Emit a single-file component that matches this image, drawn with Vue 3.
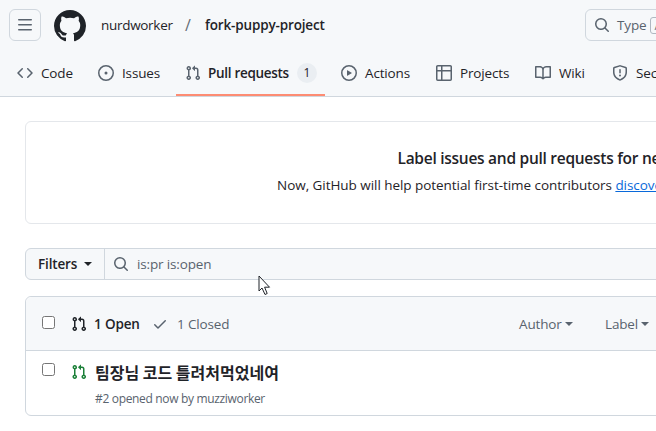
<script setup>
const paths = {
  code: 'M11.28 3.22l4.25 4.25a.75.75 0 010 1.06l-4.25 4.25a.749.749 0 01-1.275-.326.749.749 0 01.215-.734L13.94 8l-3.72-3.72a.749.749 0 01.326-1.275.749.749 0 01.734.215zm-6.56 0a.751.751 0 011.042.018.751.751 0 01.018 1.042L2.06 8l3.72 3.72a.749.749 0 01-.326 1.275.749.749 0 01-.734-.215L.47 8.53a.75.75 0 010-1.06z',
  issue: 'M8 9.5a1.5 1.5 0 100-3 1.5 1.5 0 000 3z M8 0a8 8 0 110 16A8 8 0 018 0zM1.5 8a6.5 6.5 0 1013 0 6.5 6.5 0 00-13 0z',
  pr: 'M1.5 3.25a2.25 2.25 0 113 2.122v5.256a2.251 2.251 0 11-1.5 0V5.372A2.25 2.25 0 011.5 3.25zm5.677-.177L9.573.677A.25.25 0 0110 .854V2.5h1A2.5 2.5 0 0113.5 5v5.628a2.251 2.251 0 11-1.5 0V5a1 1 0 00-1-1h-1v1.646a.25.25 0 01-.427.177L7.177 3.427a.25.25 0 010-.354zM3.75 2.5a.75.75 0 100 1.5.75.75 0 000-1.5zm0 9.5a.75.75 0 100 1.5.75.75 0 000-1.5zm8.25.75a.75.75 0 101.5 0 .75.75 0 00-1.5 0z',
  play: 'M8 0a8 8 0 110 16A8 8 0 018 0zM1.5 8a6.5 6.5 0 1013 0 6.5 6.5 0 00-13 0zm4.879-2.773l4.264 2.559a.25.25 0 010 .428l-4.264 2.559A.25.25 0 016 10.559V5.442a.25.25 0 01.379-.215z',
  table: 'M0 1.75C0 .784.784 0 1.75 0h12.5C15.216 0 16 .784 16 1.75v12.5A1.75 1.75 0 0114.25 16H1.75A1.75 1.75 0 010 14.25zM6.5 6.5v8h7.75a.25.25 0 00.25-.25V6.5zm8-1.5V1.75a.25.25 0 00-.25-.25H6.5V5zM5 1.5H1.75a.25.25 0 00-.25.25V5H5zM1.5 6.5v7.75c0 .138.112.25.25.25H5v-8z',
  book: 'M0 1.75A.75.75 0 01.75 1h4.253c1.227 0 2.317.59 3 1.501A3.743 3.743 0 0111.006 1h4.245a.75.75 0 01.75.75v10.5a.75.75 0 01-.75.75h-4.507a2.25 2.25 0 00-1.591.659l-.622.621a.75.75 0 01-1.06 0l-.622-.621A2.25 2.25 0 005.258 13H.75a.75.75 0 01-.75-.75zm7.251 10.324l.004-5.073-.002-2.253A2.25 2.25 0 005.003 2.5H1.5v9h3.757a3.75 3.75 0 011.994.574zM8.755 4.75l-.004 7.322a3.752 3.752 0 011.992-.572H14.5v-9h-3.495a2.25 2.25 0 00-2.25 2.25z',
  shield: 'M7.467.133a1.748 1.748 0 011.066 0l5.25 1.68A1.75 1.75 0 0115 3.48V7c0 1.566-.32 3.182-1.303 4.682-.983 1.498-2.585 2.813-5.032 3.855a1.697 1.697 0 01-1.33 0c-2.447-1.042-4.049-2.357-5.032-3.855C1.32 10.182 1 8.566 1 7V3.48a1.75 1.75 0 011.217-1.667zm.61 1.429a.25.25 0 00-.153 0l-5.25 1.68a.25.25 0 00-.174.238V7c0 1.358.275 2.666 1.057 3.86.784 1.194 2.121 2.34 4.366 3.297a.196.196 0 00.154 0c2.245-.956 3.582-2.104 4.366-3.298C13.225 9.666 13.5 8.36 13.5 7V3.48a.25.25 0 00-.174-.237zM9 10.5a1 1 0 11-2 0 1 1 0 012 0zm-.25-5.75a.75.75 0 10-1.5 0v3a.75.75 0 101.5 0z',
  search: 'M10.68 11.74a6 6 0 01-7.922-8.982 6 6 0 018.982 7.922l3.04 3.04a.749.749 0 01-.326 1.275.749.749 0 01-.734-.215zM11.5 7a4.499 4.499 0 10-8.997 0A4.499 4.499 0 0011.5 7z',
  check: 'M13.78 4.22a.75.75 0 010 1.06l-7.25 7.25a.75.75 0 01-1.06 0L2.22 9.28a.751.751 0 01.018-1.042.751.751 0 011.042-.018L6 10.94l6.72-6.72a.75.75 0 011.06 0z',
  bars: 'M1 2.75A.75.75 0 011.75 2h12.5a.75.75 0 010 1.5H1.75A.75.75 0 011 2.75zm0 5A.75.75 0 011.75 7h12.5a.75.75 0 010 1.5H1.75A.75.75 0 011 7.75zM1.75 12h12.5a.75.75 0 010 1.5H1.75a.75.75 0 010-1.5z',
  github: 'M8 0c4.42 0 8 3.58 8 8a8.013 8.013 0 01-5.45 7.59c-.4.08-.55-.17-.55-.38 0-.27.01-1.13.01-2.2 0-.75-.25-1.23-.54-1.48 1.78-.2 3.65-.88 3.65-3.95 0-.88-.31-1.59-.82-2.15.08-.2.36-1.02-.08-2.12 0 0-.67-.22-2.2.82-.64-.18-1.32-.27-2-.27-.68 0-1.36.09-2 .27-1.53-1.03-2.2-.82-2.2-.82-.44 1.1-.16 1.92-.08 2.12-.51.56-.82 1.28-.82 2.15 0 3.06 1.86 3.75 3.64 3.95-.23.2-.44.55-.51 1.07-.46.21-1.61.55-2.33-.66-.15-.24-.6-.83-1.23-.82-.67.01-.27.38.01.53.34.19.73.9.82 1.13.16.45.68 1.31 2.69.94 0 .67.01 1.3.01 1.49 0 .21-.15.45-.55.38A7.995 7.995 0 010 8c0-4.42 3.58-8 8-8z'
}
const tabs = [
  { icon: 'code', label: 'Code', width: 74 },
  { icon: 'issue', label: 'Issues', width: 80 },
  { icon: 'pr', label: 'Pull requests', count: 1, active: true, width: 149 },
  { icon: 'play', label: 'Actions', width: 88 },
  { icon: 'table', label: 'Projects', width: 92 },
  { icon: 'book', label: 'Wiki', width: 70 },
  { icon: 'shield', label: 'Security', width: 100 }
]
</script>

<template>
  <div class="page">
    <header class="header">
      <div class="topbar">
        <button class="menu"><svg width="16" height="16" viewBox="0 0 16 16"><path :d="paths.bars" /></svg></button>
        <svg class="logo" width="32" height="32" viewBox="0 0 16 16"><path :d="paths.github" /></svg>
        <span class="owner">nurdworker</span>
        <span class="slash">/</span>
        <span class="repo">fork-puppy-project</span>
        <div class="topsearch">
          <svg width="16" height="16" viewBox="0 0 16 16"><path :d="paths.search" /></svg>
          <span class="type">Type</span>
          <span class="kbd">/</span>
        </div>
      </div>
      <nav class="tabs">
        <a v-for="t in tabs" :key="t.label" class="tab" :class="{ active: t.active }" :style="{ width: t.width + 'px' }">
          <svg width="16" height="16" viewBox="0 0 16 16"><path :d="paths[t.icon]" /></svg>
          <span class="tab-label">{{ t.label }}</span>
          <span v-if="t.count" class="count">{{ t.count }}</span>
        </a>
      </nav>
    </header>

    <main class="main">
      <section class="banner">
        <h2>Label issues and pull requests for new contributors</h2>
        <p>Now, GitHub will help potential first-time contributors <a>discover issues</a> labeled with good first issue</p>
      </section>

      <div class="filterbar">
        <button class="filters">Filters<i class="caret"></i></button>
        <div class="query">
          <svg width="16" height="16" viewBox="0 0 16 16"><path :d="paths.search" /></svg>
          <span>is:pr is:open</span>
        </div>
      </div>

      <section class="box">
        <div class="box-head">
          <span class="cb head-cb"></span>
          <svg class="open-ic" width="16" height="16" viewBox="0 0 16 16"><path :d="paths.pr" /></svg>
          <span class="open">1 Open</span>
          <svg class="check-ic" width="16" height="16" viewBox="0 0 16 16"><path :d="paths.check" /></svg>
          <span class="closed">1 Closed</span>
          <span class="sort first">Author<i class="caret"></i></span>
          <span class="sort">Label<i class="caret"></i></span>
        </div>
        <div class="row">
          <span class="cb row-cb"></span>
          <svg class="row-ic" width="16" height="16" viewBox="0 0 16 16"><path :d="paths.pr" /></svg>
          <div class="row-body">
            <div class="title">팀장님 코드 틀려처먹었네여</div>
            <div class="meta">#2 opened now by muzziworker</div>
          </div>
        </div>
      </section>
    </main>

    <svg class="cursor" width="14" height="21" viewBox="0 0 14 21">
      <path d="M1 1V16L4 13 7 19.5 9.2 18.5 6.6 12.2H11.5Z" fill="#fff" stroke="#1f2328" stroke-width="1" stroke-linejoin="miter" />
    </svg>
  </div>
</template>

<style>
html, body { margin: 0; overflow: hidden; background: #fff; }
</style>

<style scoped>
.page {
  position: relative;
  width: 656px;
  height: 431px;
  overflow: hidden;
  font-family: "Open Sans", "Noto Sans CJK KR", sans-serif;
  font-size: 13.5px;
  letter-spacing: -0.15px;
  color: #1f2328;
}
.header {
  width: 656px;
  height: 97px;
  box-sizing: border-box;
  background: #f6f8fa;
  border-bottom: 1px solid #d0d7de;
  overflow: hidden;
}
.topbar {
  display: flex;
  align-items: center;
  height: 32px;
  padding: 9px 0 0 9px;
  width: 900px;
}
.menu {
  width: 32px;
  height: 32px;
  padding: 0;
  border: 1px solid #d0d7de;
  border-radius: 6px;
  background: #f6f8fa;
  display: flex;
  align-items: center;
  justify-content: center;
  margin-right: 13px;
}
.menu svg { fill: #59636e; }
.logo { fill: #1f2328; margin-right: 15px; margin-top: 1px; }
.owner { width: 84px; letter-spacing: -0.3px; }
.slash { width: 20px; color: #656d76; font-size: 16px; }
.repo { font-weight: 600; width: 380px; }
.topsearch {
  width: 300px;
  height: 32px;
  box-sizing: border-box;
  border: 1px solid #d0d7de;
  border-radius: 6px;
  display: flex;
  align-items: center;
  padding-left: 8px;
  color: #59636e;
  flex: none;
}
.topsearch svg { fill: #59636e; margin-right: 7px; }
.type { margin-right: 4px; }
.kbd {
  border: 1px solid #afb8c1;
  border-radius: 3px;
  width: 10px;
  height: 15px;
  font-size: 11px;
  text-align: center;
  line-height: 15px;
}
.tabs {
  display: flex;
  gap: 7px;
  width: 900px;
  padding: 16px 0 0 8px;
}
.tab {
  position: relative;
  box-sizing: border-box;
  flex: none;
  height: 39px;
  display: flex;
  align-items: center;
  padding: 0 0 8px 9px;
}
.tab svg { fill: #59636e; margin-right: 8px; flex: none; }
.tab.active { font-weight: 600; letter-spacing: -0.3px; }
.tab.active svg { margin-right: 7px; }
.tab.active::after {
  content: "";
  position: absolute;
  left: 0;
  right: 0;
  bottom: 0;
  height: 2px;
  background: #fd8c73;
}
.count {
  margin-left: 8px;
  width: 20px;
  height: 20px;
  border-radius: 10px;
  background: #eaeef2;
  font-size: 12px;
  font-weight: 500;
  text-align: center;
  line-height: 20px;
}
.main { width: 1114px; padding: 24px 0 0 25px; }
.banner {
  height: 103px;
  box-sizing: border-box;
  border: 1px solid #e4e7eb;
  border-radius: 6px;
  text-align: center;
  padding-top: 24px;
}
.banner h2 { margin: 0; font-size: 15.5px; font-weight: 600; letter-spacing: -0.27px; line-height: 24px; }
.banner p { margin: 4px 0 0; line-height: 22px; letter-spacing: -0.05px; }
.banner a { color: #0969da; text-decoration: underline; }
.filterbar {
  display: flex;
  height: 32px;
  box-sizing: border-box;
  margin-top: 24px;
  border: 1px solid #d0d7de;
  border-radius: 6px;
  background: #f6f8fa;
}
.filters {
  width: 79px;
  padding: 0 0 0 12px;
  border: 0;
  border-right: 1px solid #d0d7de;
  background: transparent;
  font: inherit;
  letter-spacing: inherit;
  font-weight: 600;
  color: #1f2328;
  text-align: left;
  display: flex;
  align-items: center;
  flex: none;
}
.caret {
  display: inline-block;
  width: 0;
  height: 0;
  border: 4px solid transparent;
  border-top-color: currentColor;
  border-bottom-width: 0;
}
.filters .caret { margin-left: 7px; }
.query {
  display: flex;
  align-items: center;
  padding-left: 8px;
  color: #59636e;
}
.query svg { fill: #59636e; margin-right: 8px; }
.box {
  margin-top: 16px;
  height: 120px;
  box-sizing: border-box;
  border: 1px solid #d0d7de;
  border-radius: 6px;
}
.box-head {
  height: 54px;
  box-sizing: border-box;
  display: flex;
  align-items: center;
  padding-left: 16px;
  background: #f6f8fa;
  border-bottom: 1px solid #d0d7de;
  border-radius: 6px 6px 0 0;
  color: #59636e;
}
.cb {
  flex: none;
  width: 13px;
  height: 13px;
  box-sizing: border-box;
  border: 1px solid #767676;
  border-radius: 2.5px;
  background: #fff;
}
.head-cb { margin-bottom: 2px; }
.open-ic { fill: #1f2328; margin-left: 16px; }
.open { font-weight: 600; color: #1f2328; margin-left: 7px; width: 51px; }
.check-ic { fill: #59636e; margin-left: 7px; }
.closed { margin-left: 9px; width: 342px; }
.sort { width: 86px; display: flex; align-items: center; }
.sort .caret { margin-left: 3px; margin-top: 1px; }
.row { display: flex; height: 65px; padding-left: 16px; align-items: flex-start; }
.row-cb { margin-top: 12px; }
.row-ic { fill: #1a7f37; margin: 13px 0 0 16px; flex: none; }
.row-body { margin-left: 8px; }
.title {
  font-family: "Noto Sans CJK KR", sans-serif;
  font-size: 16px;
  font-weight: 700;
  letter-spacing: 0;
  line-height: 24px;
  margin-top: 9px;
}
.meta { font-size: 12px; letter-spacing: -0.33px; color: #59636e; line-height: 18px; margin-top: 6px; }
.cursor { position: absolute; left: 258px; top: 275px; }
</style>
